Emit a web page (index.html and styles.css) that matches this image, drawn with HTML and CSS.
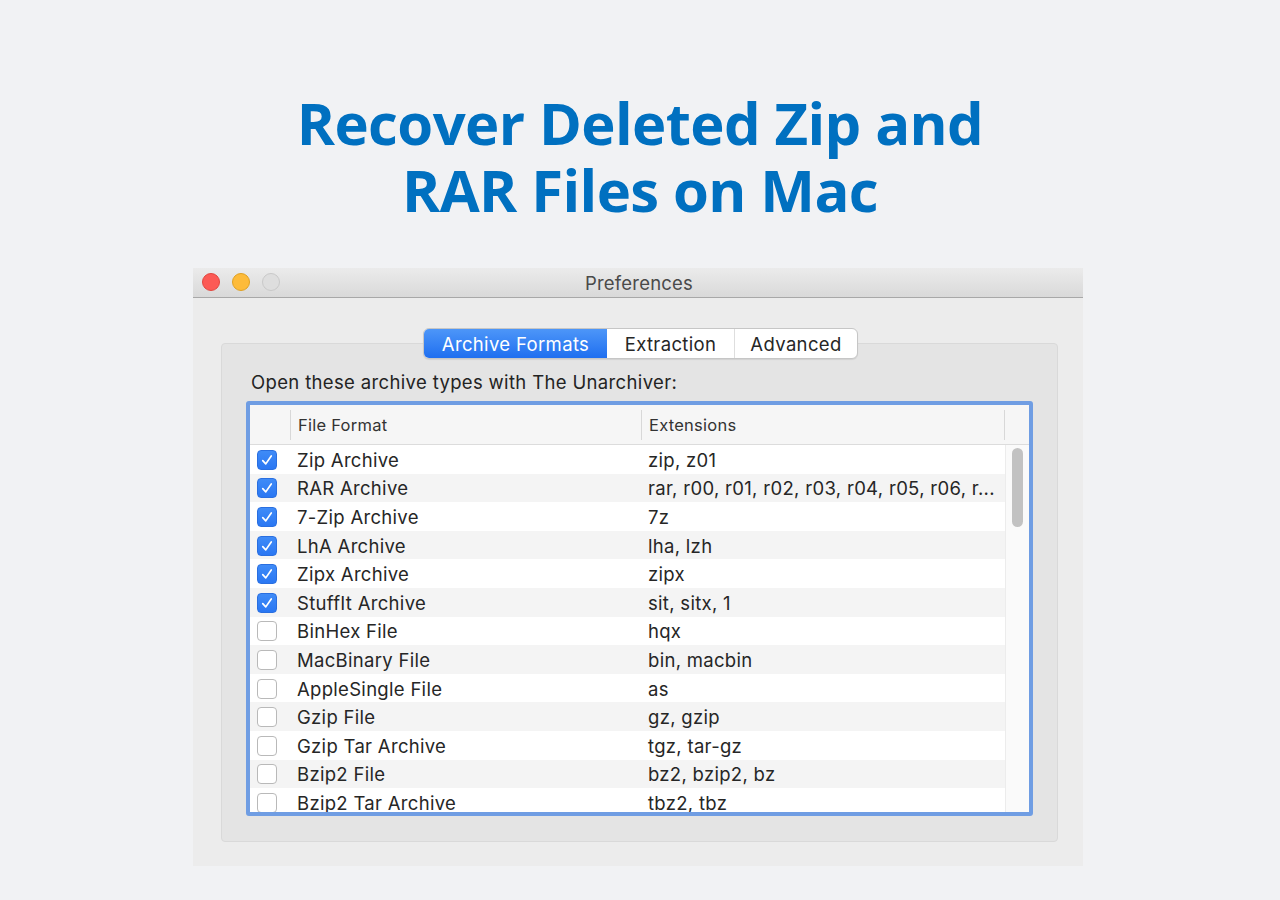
FILE: index.html
```html
<!DOCTYPE html>
<html lang="en">
<head>
<meta charset="utf-8">
<title>Recover Deleted Zip and RAR Files on Mac</title>
<link rel="stylesheet" href="styles.css">
</head>
<body>
<h1 class="headline"><span class="hl">Recover Deleted Zip and</span><span class="hl">RAR Files on Mac</span></h1>

<div class="window">
  <div class="titlebar">
    <div class="lights">
      <span class="light red"></span>
      <span class="light yellow"></span>
      <span class="light gray"></span>
    </div>
    <div class="wtitle">Preferences</div>
  </div>
  <div class="wbody">
    <div class="segmented">
      <span class="seg active">Archive Formats</span>
      <span class="seg s2">Extraction</span>
      <span class="seg s3">Advanced</span>
    </div>
    <div class="tabbox">
      <div class="label">Open these archive types with The Unarchiver:</div>
      <div class="table">
        <div class="thead">
          <div class="th c0"></div>
          <div class="th c1">File Format</div>
          <div class="th c2">Extensions</div>
          <div class="th c3"></div>
        </div>
        <div class="tmain">
          <div class="rows">
            <div class="row"><span class="cb on"><svg viewBox="0 0 19 19"><path d="M5 10.2 L8.2 13.6 L14 5.2"/></svg></span><span class="c1">Zip Archive</span><span class="c2">zip, z01</span></div>
            <div class="row"><span class="cb on"><svg viewBox="0 0 19 19"><path d="M5 10.2 L8.2 13.6 L14 5.2"/></svg></span><span class="c1">RAR Archive</span><span class="c2">rar, r00, r01, r02, r03, r04, r05, r06, r...</span></div>
            <div class="row"><span class="cb on"><svg viewBox="0 0 19 19"><path d="M5 10.2 L8.2 13.6 L14 5.2"/></svg></span><span class="c1">7-Zip Archive</span><span class="c2">7z</span></div>
            <div class="row"><span class="cb on"><svg viewBox="0 0 19 19"><path d="M5 10.2 L8.2 13.6 L14 5.2"/></svg></span><span class="c1">LhA Archive</span><span class="c2">lha, lzh</span></div>
            <div class="row"><span class="cb on"><svg viewBox="0 0 19 19"><path d="M5 10.2 L8.2 13.6 L14 5.2"/></svg></span><span class="c1">Zipx Archive</span><span class="c2">zipx</span></div>
            <div class="row"><span class="cb on"><svg viewBox="0 0 19 19"><path d="M5 10.2 L8.2 13.6 L14 5.2"/></svg></span><span class="c1">StuffIt Archive</span><span class="c2">sit, sitx, 1</span></div>
            <div class="row"><span class="cb"></span><span class="c1">BinHex File</span><span class="c2">hqx</span></div>
            <div class="row"><span class="cb"></span><span class="c1">MacBinary File</span><span class="c2">bin, macbin</span></div>
            <div class="row"><span class="cb"></span><span class="c1">AppleSingle File</span><span class="c2">as</span></div>
            <div class="row"><span class="cb"></span><span class="c1">Gzip File</span><span class="c2">gz, gzip</span></div>
            <div class="row"><span class="cb"></span><span class="c1">Gzip Tar Archive</span><span class="c2">tgz, tar-gz</span></div>
            <div class="row"><span class="cb"></span><span class="c1">Bzip2 File</span><span class="c2">bz2, bzip2, bz</span></div>
            <div class="row"><span class="cb"></span><span class="c1">Bzip2 Tar Archive</span><span class="c2">tbz2, tbz</span></div>
          </div>
          <div class="scrolltrack"><div class="thumb"></div></div>
        </div>
      </div>
    </div>
  </div>
</div>
</body>
</html>
```

FILE: styles.css
```css
* { box-sizing: border-box; }
html, body { margin: 0; padding: 0; }
body {
  background: #f1f2f4;
  width: 1280px;
  height: 900px;
  overflow: hidden;
  font-family: Inter, Roboto, "Liberation Sans", sans-serif;
}
.headline {
  margin: 89px 0 0 0;
  text-align: center;
  font-family: "Open Sans", "Noto Sans", sans-serif;
  font-weight: 700;
  font-size: 58px;
  color: #0070c0;
  letter-spacing: -0.6px;
}
.hl {
  display: block;
  height: 67px;
  line-height: 67px;
}
.window {
  margin: 45px 0 0 193px;
  width: 890px;
  height: 598px;
  background: #ececec;
}
.titlebar {
  height: 30px;
  background: linear-gradient(#ebebeb, #d9d9d9);
  border-bottom: 1px solid #a8a8a8;
  display: flex;
  align-items: center;
  position: relative;
}
.lights {
  position: absolute;
  left: 9px;
  top: 5px;
  display: flex;
  gap: 12px;
}
.light {
  width: 18px;
  height: 18px;
  border-radius: 50%;
  display: block;
}
.red { background: #fc5a55; border: 1px solid #e2463f; }
.yellow { background: #fdbb3a; border: 1px solid #e0a123; }
.gray { background: #dedede; border: 1px solid #c9c9c9; }
.wtitle {
  flex: 1;
  text-align: center;
  font-size: 18.5px;
  letter-spacing: 0.2px;
  color: #4a4a4a;
  padding-left: 2px;
}
.wbody {
  padding: 30px 25px 0 28px;
}
.segmented {
  position: relative;
  z-index: 1;
  display: flex;
  width: 435px;
  height: 31px;
  margin: 0 auto;
  transform: translateX(1px);
  background: #ffffff;
  border: 1px solid #c6c6c6;
  border-radius: 6px;
  overflow: hidden;
  box-shadow: 0 1px 1px rgba(0,0,0,0.08);
}
.seg {
  display: flex;
  align-items: center;
  justify-content: center;
  font-size: 18.5px;
  letter-spacing: 0.35px;
  color: #262626;
  height: 100%;
}
.seg.active {
  width: 183px;
  background: linear-gradient(#4d96f8, #1f6ff0);
  color: #ffffff;
}
.seg.s2 { width: 128px; border-right: 1px solid #dedede; }
.seg.s3 { flex: 1; }
.tabbox {
  margin-top: -16px;
  height: 499px;
  background: #e4e4e4;
  border: 1px solid #d9d9d9;
  border-radius: 4px;
  padding: 27px 24px 0 24px;
}
.label {
  font-size: 18.5px;
  letter-spacing: 0.35px;
  line-height: 23px;
  color: #232323;
  padding-left: 5px;
  margin-bottom: 7px;
}
.table {
  height: 415px;
  border: 4px solid #6f9de3;
  border-radius: 3px;
  background: #ffffff;
  display: flex;
  flex-direction: column;
  overflow: hidden;
}
.thead {
  height: 40px;
  flex: none;
  display: flex;
  background: #f6f6f6;
  border-bottom: 1px solid #dcdcdc;
  align-items: center;
}
.th {
  height: 30px;
  display: flex;
  align-items: center;
  font-size: 16.5px;
  letter-spacing: 0.25px;
  color: #333333;
  border-right: 1px solid #d8d8d8;
}
.th.c0 { width: 41px; }
.th.c1 { width: 351px; padding-left: 7px; }
.th.c2 { width: 363px; padding-left: 7px; }
.th.c3 { flex: 1; border-right: none; }
.tmain {
  flex: 1;
  display: flex;
  overflow: hidden;
}
.rows {
  width: 755px;
  overflow: hidden;
}
.row {
  height: 28.6px;
  display: flex;
  align-items: center;
  font-size: 18.5px;
  letter-spacing: 0.3px;
  color: #262626;
  padding-top: 1px;
}
.row:nth-child(even) { background: #f4f4f4; }
.cb {
  width: 20px;
  height: 20px;
  margin: 0 14px 0 7px;
  border-radius: 4px;
  border: 1px solid #b9b9b9;
  background: #ffffff;
  flex: none;
  display: flex;
}
.cb.on {
  background: linear-gradient(#3f8bf7, #2a77f3);
  border-color: #2a6fe0;
}
.cb svg { width: 18px; height: 18px; }
.cb path {
  fill: none;
  stroke: #ffffff;
  stroke-width: 1.8;
  stroke-linecap: round;
  stroke-linejoin: round;
}
.row .c1 { width: 351px; padding-left: 6px; white-space: nowrap; }
.row .c2 { flex: 1; padding-left: 6px; white-space: nowrap; overflow: hidden; }
.scrolltrack {
  flex: 1;
  background: #fafafa;
  border-left: 1px solid #ececec;
  padding: 3px 0 0 6px;
}
.thumb {
  width: 11px;
  height: 79px;
  background: #c2c2c2;
  border-radius: 6px;
}
```
